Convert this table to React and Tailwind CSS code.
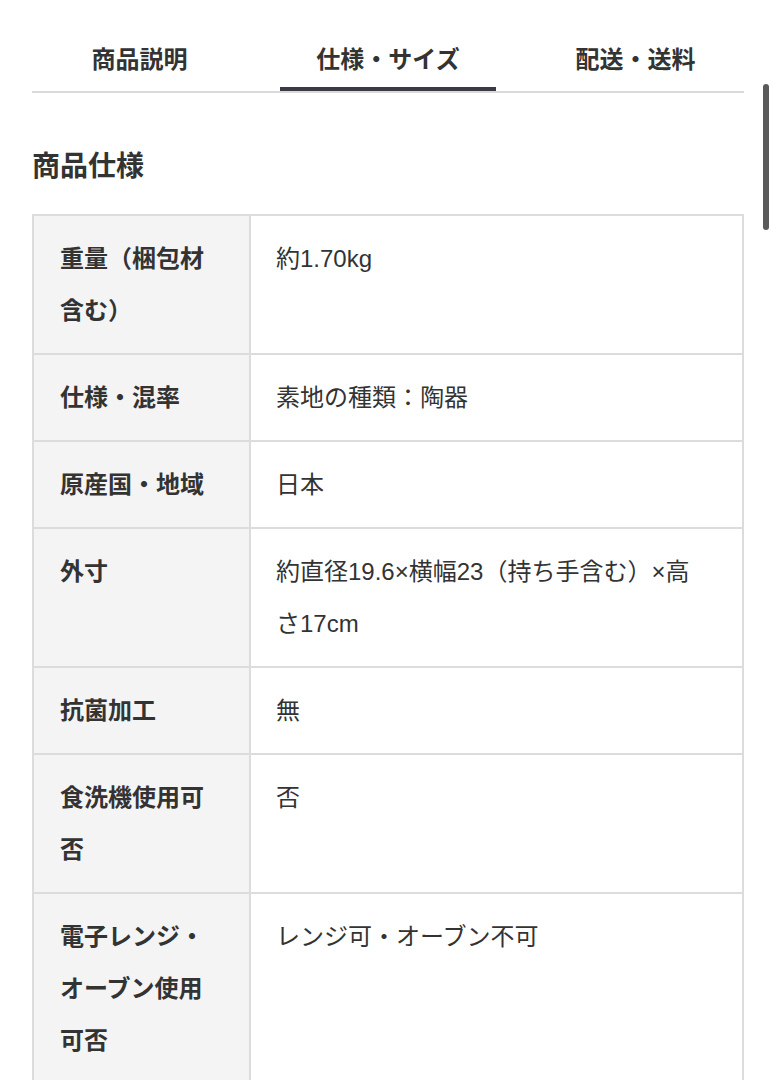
const rows = [
  { label: "重量（梱包材含む）", value: "約1.70kg" },
  { label: "仕様・混率", value: "素地の種類：陶器" },
  { label: "原産国・地域", value: "日本" },
  { label: "外寸", value: "約直径19.6×横幅23（持ち手含む）×高さ17cm" },
  { label: "抗菌加工", value: "無" },
  { label: "食洗機使用可否", value: "否" },
  { label: "電子レンジ・オーブン使用可否", value: "レンジ可・オーブン不可" },
];

export default function App() {
  return (
    <div
      className="relative min-h-[1080px] bg-white text-[#333333] overflow-hidden"
      style={{ fontFamily: '"Liberation Sans", "Noto Sans CJK JP", sans-serif' }}
    >
      {/* scrollbar */}
      <div className="absolute left-[763px] top-[84px] w-[6px] h-[146px] rounded-full bg-[#5a5a5a]" />

      <div className="mx-[32px] w-[712px]">
        {/* tabs */}
        <div className="flex border-b-2 border-[#dadada]">
          <div className="ml-[23px] w-[169px] pt-[44px] pb-[15px] text-center text-[24px] leading-[32px] font-bold">
            商品説明
          </div>
          <div className="ml-[56px] w-[216px] pt-[44px] text-center text-[24px] leading-[32px] font-bold">
            <div className="pb-[11px]">仕様・サイズ</div>
            <div className="h-[4px] bg-[#3a3a44]" />
          </div>
          <div className="ml-[43px] w-[193px] pt-[44px] pb-[15px] text-center text-[24px] leading-[32px] font-bold">
            配送・送料
          </div>
        </div>

        <h2 className="mt-[54px] text-[28px] leading-[40px] font-bold">商品仕様</h2>

        <table className="mt-[27px] w-full border-collapse border-2 border-[#dcdcdc] text-[24px] leading-[52px]">
          <tbody>
            {rows.map((r) => (
              <tr key={r.label}>
                <th className="w-[217px] border-2 border-[#dcdcdc] bg-[#f4f4f4] px-[26px] pt-[17px] pb-[16px] text-left align-top font-bold">
                  {r.label}
                </th>
                <td className="border-2 border-[#dcdcdc] pl-[25px] pr-[38px] pt-[17px] pb-[16px] align-top font-normal">
                  {r.value}
                </td>
              </tr>
            ))}
          </tbody>
        </table>
      </div>
    </div>
  );
}
